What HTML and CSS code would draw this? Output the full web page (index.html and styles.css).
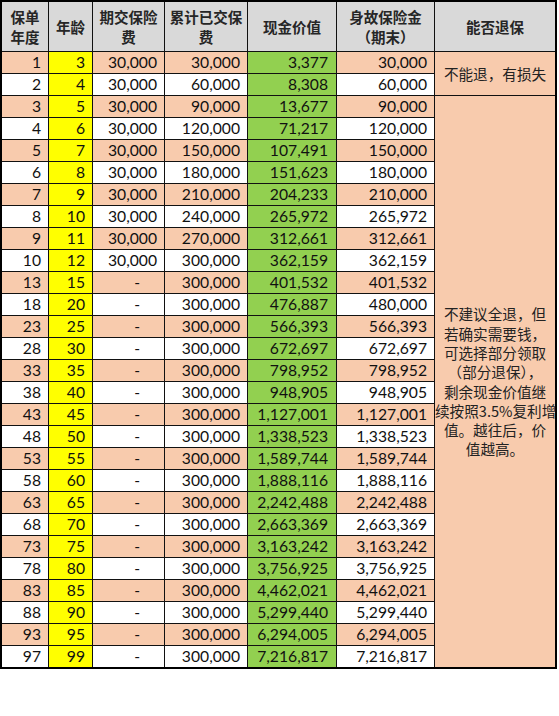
FILE: index.html
```html
<!DOCTYPE html>
<html lang="zh-CN">
<head>
<meta charset="utf-8">
<title>保单现金价值表</title>
<link rel="stylesheet" href="styles.css">
</head>
<body>
<table class="sheet">
  <thead>
    <tr class="head">
      <th class="c-year">保单<br>年度</th>
      <th class="c-age">年龄</th>
      <th class="c-prem">期交保险<br>费</th>
      <th class="c-cum">累计已交保<br>费</th>
      <th class="c-cash">现金价值</th>
      <th class="c-death">身故保险金<br>（期末）</th>
      <th class="c-note">能否退保</th>
    </tr>
  </thead>
  <tbody>
    <tr class="odd"><td class="num">1</td><td class="num age">3</td><td class="num">30,000</td><td class="num">30,000</td><td class="num cash">3,377</td><td class="num">30,000</td><td class="note" rowspan="2">不能退，有损失</td></tr>
    <tr><td class="num">2</td><td class="num age">4</td><td class="num">30,000</td><td class="num">60,000</td><td class="num cash">8,308</td><td class="num">60,000</td></tr>
    <tr class="odd"><td class="num">3</td><td class="num age">5</td><td class="num">30,000</td><td class="num">90,000</td><td class="num cash">13,677</td><td class="num">90,000</td><td class="note note-long" rowspan="26">不建议全退，但<br>若确实需要钱，<br>可选择部分领取<br>（部分退保），<br>剩余现金价值继<br>续按照3.5%复利增<br>值。越往后，价<br>值越高。</td></tr>
    <tr><td class="num">4</td><td class="num age">6</td><td class="num">30,000</td><td class="num">120,000</td><td class="num cash">71,217</td><td class="num">120,000</td></tr>
    <tr class="odd"><td class="num">5</td><td class="num age">7</td><td class="num">30,000</td><td class="num">150,000</td><td class="num cash">107,491</td><td class="num">150,000</td></tr>
    <tr><td class="num">6</td><td class="num age">8</td><td class="num">30,000</td><td class="num">180,000</td><td class="num cash">151,623</td><td class="num">180,000</td></tr>
    <tr class="odd"><td class="num">7</td><td class="num age">9</td><td class="num">30,000</td><td class="num">210,000</td><td class="num cash">204,233</td><td class="num">210,000</td></tr>
    <tr><td class="num">8</td><td class="num age">10</td><td class="num">30,000</td><td class="num">240,000</td><td class="num cash">265,972</td><td class="num">265,972</td></tr>
    <tr class="odd"><td class="num">9</td><td class="num age">11</td><td class="num">30,000</td><td class="num">270,000</td><td class="num cash">312,661</td><td class="num">312,661</td></tr>
    <tr><td class="num">10</td><td class="num age">12</td><td class="num">30,000</td><td class="num">300,000</td><td class="num cash">362,159</td><td class="num">362,159</td></tr>
    <tr class="odd"><td class="num">13</td><td class="num age">15</td><td class="num dash">-</td><td class="num">300,000</td><td class="num cash">401,532</td><td class="num">401,532</td></tr>
    <tr><td class="num">18</td><td class="num age">20</td><td class="num dash">-</td><td class="num">300,000</td><td class="num cash">476,887</td><td class="num">480,000</td></tr>
    <tr class="odd"><td class="num">23</td><td class="num age">25</td><td class="num dash">-</td><td class="num">300,000</td><td class="num cash">566,393</td><td class="num">566,393</td></tr>
    <tr><td class="num">28</td><td class="num age">30</td><td class="num dash">-</td><td class="num">300,000</td><td class="num cash">672,697</td><td class="num">672,697</td></tr>
    <tr class="odd"><td class="num">33</td><td class="num age">35</td><td class="num dash">-</td><td class="num">300,000</td><td class="num cash">798,952</td><td class="num">798,952</td></tr>
    <tr><td class="num">38</td><td class="num age">40</td><td class="num dash">-</td><td class="num">300,000</td><td class="num cash">948,905</td><td class="num">948,905</td></tr>
    <tr class="odd"><td class="num">43</td><td class="num age">45</td><td class="num dash">-</td><td class="num">300,000</td><td class="num cash">1,127,001</td><td class="num">1,127,001</td></tr>
    <tr><td class="num">48</td><td class="num age">50</td><td class="num dash">-</td><td class="num">300,000</td><td class="num cash">1,338,523</td><td class="num">1,338,523</td></tr>
    <tr class="odd"><td class="num">53</td><td class="num age">55</td><td class="num dash">-</td><td class="num">300,000</td><td class="num cash">1,589,744</td><td class="num">1,589,744</td></tr>
    <tr><td class="num">58</td><td class="num age">60</td><td class="num dash">-</td><td class="num">300,000</td><td class="num cash">1,888,116</td><td class="num">1,888,116</td></tr>
    <tr class="odd"><td class="num">63</td><td class="num age">65</td><td class="num dash">-</td><td class="num">300,000</td><td class="num cash">2,242,488</td><td class="num">2,242,488</td></tr>
    <tr><td class="num">68</td><td class="num age">70</td><td class="num dash">-</td><td class="num">300,000</td><td class="num cash">2,663,369</td><td class="num">2,663,369</td></tr>
    <tr class="odd"><td class="num">73</td><td class="num age">75</td><td class="num dash">-</td><td class="num">300,000</td><td class="num cash">3,163,242</td><td class="num">3,163,242</td></tr>
    <tr><td class="num">78</td><td class="num age">80</td><td class="num dash">-</td><td class="num">300,000</td><td class="num cash">3,756,925</td><td class="num">3,756,925</td></tr>
    <tr class="odd"><td class="num">83</td><td class="num age">85</td><td class="num dash">-</td><td class="num">300,000</td><td class="num cash">4,462,021</td><td class="num">4,462,021</td></tr>
    <tr><td class="num">88</td><td class="num age">90</td><td class="num dash">-</td><td class="num">300,000</td><td class="num cash">5,299,440</td><td class="num">5,299,440</td></tr>
    <tr class="odd"><td class="num">93</td><td class="num age">95</td><td class="num dash">-</td><td class="num">300,000</td><td class="num cash">6,294,005</td><td class="num">6,294,005</td></tr>
    <tr class="last"><td class="num">97</td><td class="num age">99</td><td class="num dash">-</td><td class="num">300,000</td><td class="num cash">7,216,817</td><td class="num">7,216,817</td></tr>
  </tbody>
</table>
</body>
</html>
```

FILE: styles.css
```css
html, body {
  margin: 0;
  padding: 0;
  background: #ffffff;
}

.sheet {
  box-sizing: border-box;
  width: 557px;
  table-layout: fixed;
  border-collapse: separate;
  border-spacing: 0;
  border: 2px solid #000;
  font-family: Lato, "Noto Sans CJK SC", sans-serif;
  font-size: 15.7px;
  color: #111;
}

.sheet th,
.sheet td {
  box-sizing: border-box;
  padding: 0;
  border-right: 1px solid #111;
  border-bottom: 1px solid #111;
  background: #fff;
}

.sheet .c-note,
.sheet .note {
  border-right: 0;
}

.sheet .last td,
.sheet .note-long {
  border-bottom: 0;
}

.head th {
  height: 50px;
  background: #d9d9d9;
  font-family: "Noto Sans CJK SC", sans-serif;
  font-weight: 700;
  font-size: 14.5px;
  line-height: 20px;
  color: #262626;
  text-align: center;
  vertical-align: middle;
}

.c-year { width: 47px; }
.c-age { width: 44px; }
.c-prem { width: 72px; }
.c-cum { width: 83px; }
.c-cash { width: 89px; }
.c-death { width: 98px; }
.c-note { width: 120px; }

.sheet td {
  height: 22px;
  line-height: 21px;
  vertical-align: middle;
  white-space: nowrap;
}

.sheet .last td {
  height: 21px;
}

.sheet td.num {
  text-align: right;
  padding-right: 7px;
}

.sheet td.dash {
  padding-right: 24px;
}

.odd td {
  background: #f8cbad;
}

.sheet td.age {
  background: #ffff00;
}

.sheet td.cash {
  background: #92d050;
  padding-right: 8px;
}

.sheet td.note {
  background: #f8cbad;
  font-family: "Noto Sans CJK SC", sans-serif;
  font-size: 14.6px;
  color: #222;
  text-align: center;
  vertical-align: middle;
}

.sheet td.note-long {
  line-height: 19.3px;
}
```
